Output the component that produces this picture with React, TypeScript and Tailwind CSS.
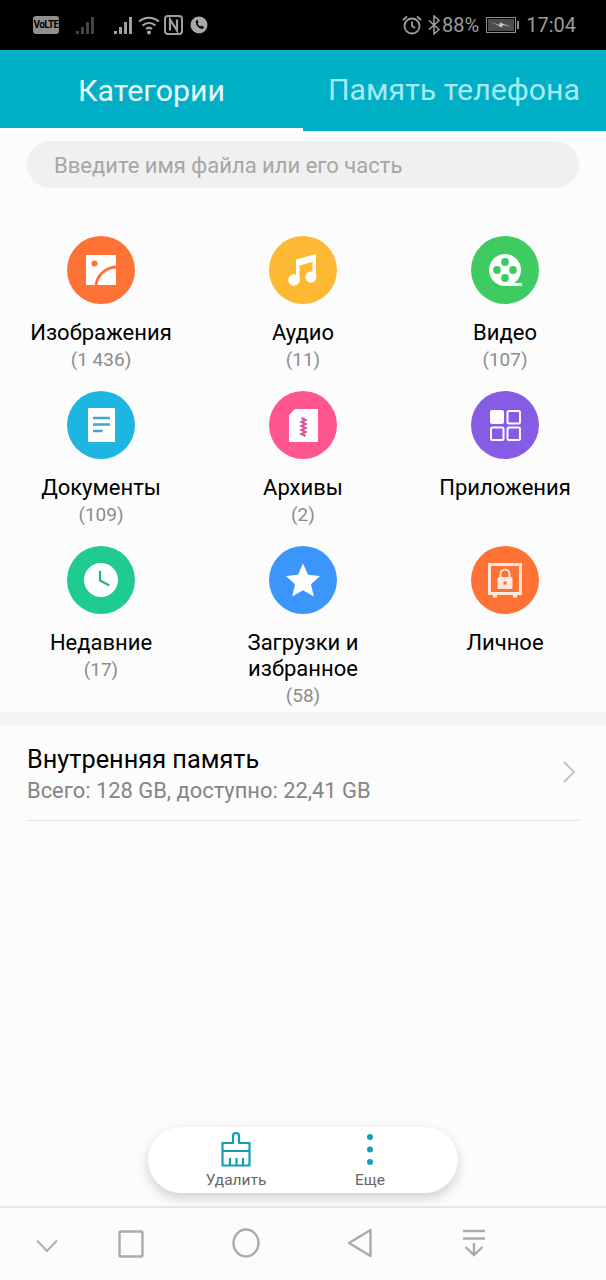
import type React from "react"

const font = { fontFamily: "Roboto, 'Noto Sans', sans-serif" }

function ImageIcon() {
  return (
    <svg width="32" height="32" viewBox="0 0 32 32">
      <rect x="1" y="1" width="30" height="30" fill="#fff" />
      <circle cx="9.500" cy="9.500" r="3" fill="#ff7236" />
      <path d="M11 31c1-9 9-17.500 20-18" fill="none" stroke="#ff7236" strokeWidth="2.800" />
    </svg>
  )
}

function MusicIcon() {
  return (
    <svg width="32" height="34" viewBox="0 0 32 34" fill="#fff">
      <path d="M9 6.500 29 1v22h-3.500V9L12.500 12.500V28H9z" />
      <circle cx="7" cy="27" r="5.800" />
      <circle cx="24" cy="24" r="5.500" />
    </svg>
  )
}

function FilmIcon() {
  return (
    <svg width="34" height="34" viewBox="0 0 34 34">
      <circle cx="17" cy="17" r="16" fill="#fff" />
      <path d="M17 33h17v-3H17z" fill="#fff" />
      <circle cx="17" cy="9" r="3.900" fill="#3ecb62" />
      <circle cx="17" cy="25" r="3.900" fill="#3ecb62" />
      <circle cx="9" cy="17" r="3.900" fill="#3ecb62" />
      <circle cx="25" cy="17" r="3.900" fill="#3ecb62" />
    </svg>
  )
}

function DocIcon() {
  return (
    <svg width="27" height="34" viewBox="0 0 27 34">
      <rect width="27" height="34" fill="#fff" />
      <path d="M5 10h17M5 16.500h17M5 23h9.500" stroke="#3aa9cf" strokeWidth="2.400" />
    </svg>
  )
}

function ZipIcon() {
  return (
    <svg width="29" height="33" viewBox="0 0 29 33">
      <path d="M6 0h23v33H0V6z" fill="#fff" />
      <path d="M12.500 9l4 2-4 2 4 2-4 2 4 2-4 2 4 2-4 2 4 2" fill="none" stroke="#d6559c" strokeWidth="2.200" />
    </svg>
  )
}

function AppsIcon() {
  return (
    <svg width="31" height="31" viewBox="0 0 31 31">
      <rect x="0" y="0" width="14" height="14" rx="2" fill="#fff" />
      <rect x="17.500" y="1" width="12.500" height="12.500" rx="1.500" fill="none" stroke="#fff" strokeWidth="2" />
      <rect x="1" y="17.500" width="12.500" height="12.500" rx="1.500" fill="none" stroke="#fff" strokeWidth="2" />
      <rect x="17.500" y="17.500" width="12.500" height="12.500" rx="1.500" fill="none" stroke="#fff" strokeWidth="2" />
    </svg>
  )
}

function ClockIcon() {
  return (
    <svg width="34" height="34" viewBox="0 0 34 34">
      <circle cx="17" cy="17" r="17" fill="#fff" />
      <path d="M16 8.500V17.500L24.500 22" fill="none" stroke="#2ab587" strokeWidth="2.200" strokeLinecap="round" />
    </svg>
  )
}

function StarIcon() {
  return (
    <svg width="34" height="34" viewBox="0 0 34 34" fill="#fff">
      <path d="M17 0.500 22 11.800 34 13 25 21.300 27.800 33.500 17 27.200 6.200 33.500 9 21.300 0 13 12 11.800z" />
    </svg>
  )
}

function SafeIcon() {
  return (
    <svg width="34" height="35" viewBox="0 0 34 35">
      <rect x="1.500" y="1.500" width="31" height="29" fill="none" stroke="#ffe8da" strokeWidth="3" />
      <path d="M5 32h4v2.500H5zM25 32h4v2.500h-4z" fill="#ffe8da" />
      <path d="M12.500 14v-3a4.500 4.500 0 0 1 9 0v3" fill="none" stroke="#ffe8da" strokeWidth="2" />
      <rect x="9.500" y="14" width="15" height="12" rx="1" fill="#ffe8da" />
      <circle cx="17" cy="20" r="1.800" fill="#ff7236" />
    </svg>
  )
}

interface CategoryProps {
  icon: React.ReactNode
  color: string
  label: string
  count?: string
}

const categories: CategoryProps[] = [
  { icon: <ImageIcon />, color: "bg-[#ff7236]", label: "Изображения", count: "(1 436)" },
  { icon: <MusicIcon />, color: "bg-[#fdb933]", label: "Аудио", count: "(11)" },
  { icon: <FilmIcon />, color: "bg-[#3ecb62]", label: "Видео", count: "(107)" },
  { icon: <DocIcon />, color: "bg-[#1db6e2]", label: "Документы", count: "(109)" },
  { icon: <ZipIcon />, color: "bg-[#ff5591]", label: "Архивы", count: "(2)" },
  { icon: <AppsIcon />, color: "bg-[#865ce6]", label: "Приложения" },
  { icon: <ClockIcon />, color: "bg-[#1fcb8f]", label: "Недавние", count: "(17)" },
  { icon: <StarIcon />, color: "bg-[#3b96fb]", label: "Загрузки и избранное", count: "(58)" },
  { icon: <SafeIcon />, color: "bg-[#ff7236]", label: "Личное" },
]

function Category({ icon, color, label, count }: CategoryProps) {
  return (
    <div className="flex flex-col items-center">
      <div className={`w-[68px] h-[68px] rounded-full flex items-center justify-center ${color}`}>{icon}</div>
      <div className="mt-[16px] w-[160px] text-center text-[22px] leading-[26px] text-black">{label}</div>
      {count && <div className="text-center text-[19px] leading-[27px] text-[#8c8c8c]">{count}</div>}
    </div>
  )
}

function StatusBar() {
  return (
    <div className="h-[50px] bg-black flex items-center justify-between pl-[33px] pr-[30px] text-[#9c9c9c]">
      <div className="flex items-center">
        <div className="w-[26px] h-[18px] rounded-[3px] bg-[#8f8f8f] text-black text-[10px] tracking-[-0.600px] font-bold leading-[18px] text-center whitespace-nowrap overflow-hidden">VoLTE</div>
        <svg className="ml-[16px]" width="22" height="20" viewBox="0 0 22 20" fill="#444">
          <path d="M1 16h3v3H1zM6 12h3v7H6zM11 7h3v12h-3zM16 2h3v17h-3z" />
        </svg>
        <svg className="ml-[16px]" width="22" height="20" viewBox="0 0 22 20" fill="#a0a0a0">
          <path d="M1 16h3v3H1zM6 12h3v7H6zM11 7h3v12h-3zM16 2h3v17h-3z" />
        </svg>
        <svg className="ml-[3px]" width="22" height="20" viewBox="0 0 22 20" fill="none" stroke="#a8a8a8" strokeWidth="2">
          <path d="M1 6.500c6-5 14-5 20 0M4.500 10.500c4-3.500 9-3.500 13 0M8 14c2-1.500 4-1.500 6 0" />
          <circle cx="11" cy="17.500" r="1" fill="#a8a8a8" />
        </svg>
        <svg className="ml-[4px]" width="19" height="20" viewBox="0 0 19 20" fill="none">
          <rect x="1" y="1" width="17" height="18" rx="3" stroke="#a0a0a0" strokeWidth="2" />
          <path d="M6 15.500V4.500l7 11V4.500" stroke="#a0a0a0" strokeWidth="2.200" />
        </svg>
        <svg className="ml-[7px]" width="18" height="18" viewBox="0 0 18 18">
          <circle cx="9" cy="9" r="8.500" fill="#a8a8a8" />
          <path d="M6 4.500c-1 4 2.500 8.500 7 8.500l1-2-2.500-1.500-1 1C9 10 8 8.500 7.500 7.500l1-1L7.500 4z" fill="#000" />
        </svg>
      </div>
      <div className="flex items-center text-[20px]">
        <svg width="20" height="20" viewBox="0 0 20 20" fill="none" stroke="#a0a0a0" strokeWidth="1.800">
          <circle cx="10" cy="11" r="7.500" />
          <path d="M10 6.500V11l3 2M1 5l4-3.500M19 5l-4-3.500" />
        </svg>
        <svg className="ml-[6px]" width="13" height="20" viewBox="0 0 13 20" fill="none" stroke="#a0a0a0" strokeWidth="1.500">
          <path d="M1 5.500l10 9-5 4.500V1l5 4.500-10 9" />
        </svg>
        <span className="ml-[1px]">88%</span>
        <svg className="ml-[7px]" width="34" height="16" viewBox="0 0 34 16">
          <rect x="0.500" y="0.500" width="29" height="15" fill="none" stroke="#8c8c8c" />
          <rect x="2" y="2" width="26" height="12" fill="#4c4c4c" />
          <path d="M5 5l8 3 1-2.500 11 4.500-8-2-1 2.500z" fill="#c8c8c8" />
          <rect x="31" y="4" width="2" height="8" fill="#8c8c8c" />
        </svg>
        <span className="ml-[6px]">17:04</span>
      </div>
    </div>
  )
}

function Tabs() {
  return (
    <div className="h-[81px] bg-[#00aec6] flex text-[30.300px]">
      <div className="w-[303px] border-b-[3px] border-white flex items-center justify-center text-[#e8fbfd] pt-[3px]">
        Категории
      </div>
      <div className="flex-1 overflow-hidden flex items-center pl-[25px] pb-[1px] text-[#a4eaf2] whitespace-nowrap">
        Память телефона
      </div>
    </div>
  )
}

function Toolbar() {
  return (
    <div className="mt-auto mb-[13px] mx-auto w-[310px] h-[66px] rounded-full bg-white shadow-[0_5px_12px_rgba(0,0,0,0.180)] flex">
      <div className="w-[176px] flex flex-col items-center pt-[5px]">
        <svg width="30" height="35" viewBox="0 0 30 35" fill="none" stroke="#139fb3" strokeWidth="2.200" strokeLinejoin="round">
          <path d="M12 11V4a3 3 0 0 1 6 0v7h10.500v22.500h-27V11z" />
          <path d="M1.500 19h27M9 33.500V26M15.500 33.500V26M22 33.500V26" />
        </svg>
        <div className="mt-[3px] text-[15.500px] leading-[20px] text-[#666]">Удалить</div>
      </div>
      <div className="w-[92px] flex flex-col items-center pt-[5px]">
        <svg width="8" height="35" viewBox="0 0 8 35" fill="#139fb3">
          <circle cx="4" cy="5" r="3" />
          <circle cx="4" cy="17.500" r="3" />
          <circle cx="4" cy="30" r="3" />
        </svg>
        <div className="mt-[3px] text-[15.500px] leading-[20px] text-[#666]">Еще</div>
      </div>
    </div>
  )
}

function NavBar() {
  return (
    <div className="h-[74px] border-t-2 border-[#e6e6e6] flex items-start">
      <svg className="ml-[36px] mt-[31px]" width="22" height="14" viewBox="0 0 22 14" fill="none" stroke="#b0b0b0" strokeWidth="2">
        <path d="M1 1.500 11 12 21 1.500" />
      </svg>
      <svg className="ml-[60px] mt-[22px]" width="26" height="28" viewBox="0 0 26 28" fill="none" stroke="#ababab" strokeWidth="2.400">
        <rect x="1.500" y="1.500" width="23" height="25" rx="1.500" />
      </svg>
      <svg className="ml-[88px] mt-[20px]" width="28" height="30" viewBox="0 0 28 30" fill="none" stroke="#ababab" strokeWidth="2.400">
        <ellipse cx="14" cy="15" rx="12.500" ry="13.500" />
      </svg>
      <svg className="ml-[87px] mt-[20px]" width="26" height="30" viewBox="0 0 26 30" fill="none" stroke="#ababab" strokeWidth="2.400" strokeLinejoin="round">
        <path d="M23.500 2 2 15l21.500 13z" />
      </svg>
      <svg className="ml-[89px] mt-[21px]" width="24" height="28" viewBox="0 0 24 28" fill="none" stroke="#ababab" strokeWidth="2.400">
        <path d="M1 2h22M1 9.500h22M12 14v12M3.500 18 12 26l8.500-8" />
      </svg>
    </div>
  )
}

export default function App() {
  return (
    <div className="w-[606px] h-[1280px] bg-[#fcfcfc] flex flex-col overflow-hidden" style={font}>
      <StatusBar />
      <Tabs />
      <div className="mx-[27px] mt-[10px] h-[47px] rounded-full bg-[#f0f0f0] flex items-center px-[27px] pt-[2px] text-[22px] text-[#a6a6a6]">
        Введите имя файла или его часть
      </div>
      <div className="mt-[48px] grid grid-cols-3 grid-rows-[155px_155px_auto]">
        {categories.map((c) => (
          <Category key={c.label} {...c} />
        ))}
      </div>
      <div className="mt-[3px] h-[13px] bg-[#f5f5f5]" />
      <div className="mx-[27px] h-[96px] border-b border-[#e0e0e0] flex items-center justify-between">
        <div className="pt-[4px]">
          <div className="text-[25.300px] leading-[32px] text-black">Внутренняя память</div>
          <div className="text-[21.900px] leading-[30px] text-[#858585]">Всего: 128 GB, доступно: 22,41 GB</div>
        </div>
        <svg className="mr-[3px] mb-[1px]" width="14" height="22" viewBox="0 0 14 22" fill="none" stroke="#c4c4c4" strokeWidth="2">
          <path d="M2 1l10 10L2 21" />
        </svg>
      </div>
      <Toolbar />
      <NavBar />
    </div>
  )
}
